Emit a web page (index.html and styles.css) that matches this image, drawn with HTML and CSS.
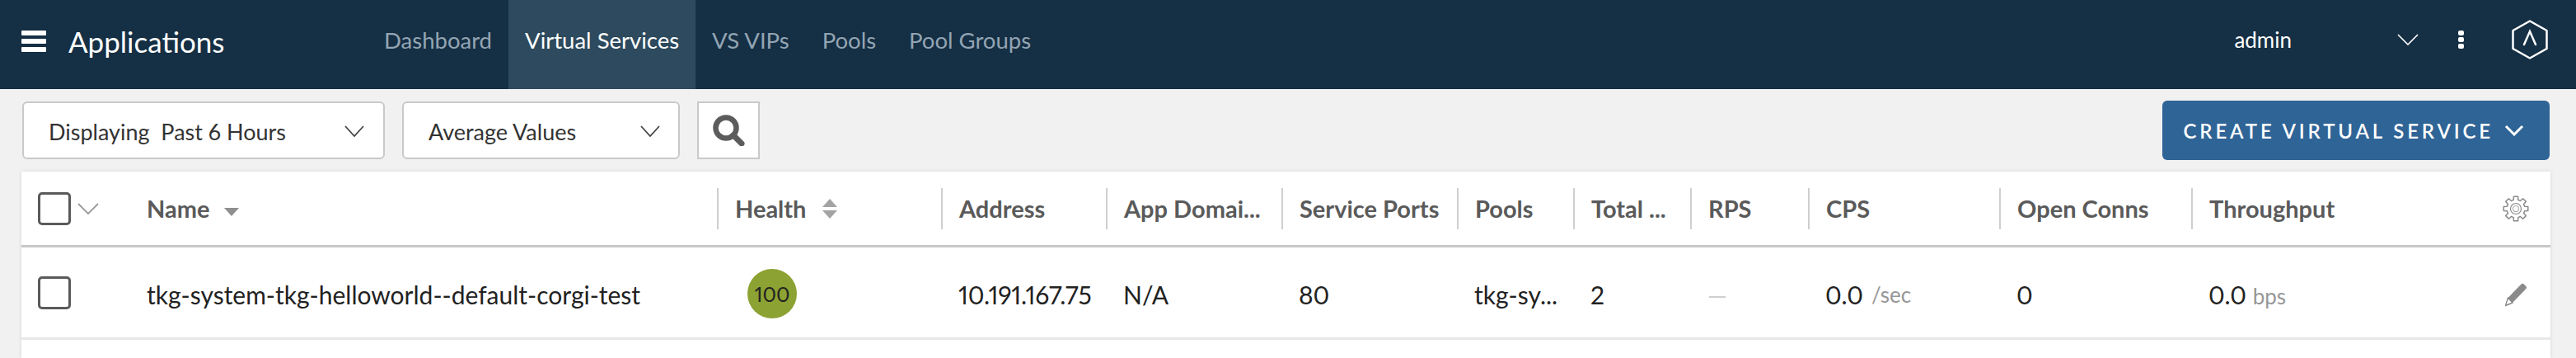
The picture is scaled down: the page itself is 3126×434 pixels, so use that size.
FILE: index.html
```html
<!DOCTYPE html>
<html lang="en">
<head>
    <meta charset="UTF-8">
    <title>Applications</title>
    <link rel="stylesheet" href="styles.css">
</head>
<body>
    <header class="topbar">
        <div class="brand">
            <div class="burger"><span></span><span></span><span></span></div>
            <div class="brand-title">Applications</div>
        </div>
        <nav class="tabs">
            <a class="tab">Dashboard</a>
            <a class="tab active">Virtual Services</a>
            <a class="tab">VS VIPs</a>
            <a class="tab">Pools</a>
            <a class="tab">Pool Groups</a>
        </nav>
        <div class="user">
            <span class="user-name">admin</span>
            <svg class="user-caret" width="26" height="14" viewBox="0 0 26 14"><path d="M1 1l12 12L25 1" fill="none" stroke="#fff" stroke-width="1.6"/></svg>
            <div class="dots"><span></span><span></span><span></span></div>
            <svg class="logo" width="44" height="48" viewBox="0 0 44 48"><path d="M22 1.5L42.5 13v22L22 46.5 1.500 35V13z" fill="none" stroke="#fff" stroke-width="2.500" stroke-linejoin="round"/><path d="M15 30l7-16 7 16" fill="none" stroke="#fff" stroke-width="2.500" stroke-linecap="round"/></svg>
        </div>
    </header>

    <div class="toolbar">
        <div class="select select-time">
            <span>Displaying&nbsp; Past 6 Hours</span>
            <svg width="24" height="14" viewBox="0 0 24 14"><path d="M1 1l11 12L23 1" fill="none" stroke="#444" stroke-width="1.8"/></svg>
        </div>
        <div class="select select-values">
            <span>Average Values</span>
            <svg width="24" height="14" viewBox="0 0 24 14"><path d="M1 1l11 12L23 1" fill="none" stroke="#444" stroke-width="1.8"/></svg>
        </div>
        <div class="search-btn">
            <svg width="40" height="38" viewBox="0 0 40 38"><circle cx="17" cy="16" r="12.500" fill="none" stroke="#5c5c5c" stroke-width="6.500"/><path d="M26 25l10 10" stroke="#5c5c5c" stroke-width="7" stroke-linecap="round"/></svg>
        </div>
        <button class="create-btn">
            CREATE VIRTUAL SERVICE
            <svg width="24" height="14" viewBox="0 0 24 14"><path d="M2 2l10 10L22 2" fill="none" stroke="#fff" stroke-width="3"/></svg>
        </button>
    </div>

    <main class="grid">
        <div class="row row-head">
            <div class="cell cell-check">
                <span class="checkbox"></span>
                <svg class="check-caret" width="26" height="14" viewBox="0 0 26 14"><path d="M1 1l12 12L25 1" fill="none" stroke="#999" stroke-width="1.800"/></svg>
            </div>
            <div class="cell">Name <span class="sort-down"></span></div>
            <div class="cell divided">Health <span class="sort-both"><i class="up"></i><i class="down"></i></span></div>
            <div class="cell divided">Address</div>
            <div class="cell divided">App Domai...</div>
            <div class="cell divided">Service Ports</div>
            <div class="cell divided">Pools</div>
            <div class="cell divided">Total ...</div>
            <div class="cell divided">RPS</div>
            <div class="cell divided">CPS</div>
            <div class="cell divided">Open Conns</div>
            <div class="cell divided cell-last">
                Throughput
                <svg class="gear" width="32" height="32" viewBox="0 0 32 32" fill="none" stroke="#8a8a8a">
                    <path stroke-width="1.500" stroke-linejoin="round" d="M13.15 5.37L13.4 1.23H18.6L18.85 5.37L21.5 6.47L24.6 3.71L28.29 7.4L25.53 10.5L26.63 13.15L30.77 13.4V18.6L26.63 18.85L25.53 21.5L28.29 24.6L24.6 28.29L21.5 25.53L18.85 26.63L18.6 30.77H13.4L13.15 26.63L10.5 25.53L7.4 28.29L3.71 24.6L6.47 21.5L5.37 18.85L1.23 18.6V13.4L5.37 13.15L6.47 10.5L3.71 7.4L7.4 3.71L10.5 6.47z"/>
                    <circle cx="16" cy="16" r="6.500" stroke-width="1.200"/>
                    <circle cx="16" cy="16" r="3.500" stroke="#b0b0b0" stroke-width="1.200"/>
                </svg>
            </div>
        </div>
        <div class="row row-data">
            <div class="cell cell-check"><span class="checkbox"></span></div>
            <div class="cell">tkg-system-tkg-helloworld--default-corgi-test</div>
            <div class="cell"><span class="health">100</span></div>
            <div class="cell address">10.191.167.75</div>
            <div class="cell">N/A</div>
            <div class="cell">80</div>
            <div class="cell">tkg-sy...</div>
            <div class="cell">2</div>
            <div class="cell empty">—</div>
            <div class="cell">0.0 <span class="unit">/sec</span></div>
            <div class="cell">0</div>
            <div class="cell cell-last">
                <span>0.0 <span class="unit">bps</span></span>
                <svg class="pencil" width="28" height="30" viewBox="0 0 28 30">
                    <path d="M20.500 2.500q1.500-1.500 3-.3l3 3q1.200 1.500-.3 3L10 25 4.500 19z" fill="#8a8a8a"/>
                    <path d="M4.500 19L1.500 28.500 10 25z" fill="#fff" stroke="#8a8a8a" stroke-width="1.400" stroke-linejoin="round"/>
                </svg>
            </div>
        </div>
        <div class="row-rest"></div>
    </main>
</body>
</html>
```
FILE: styles.css
```css
html, body {
    height: 100%;
}

body {
    margin: 0;
    display: flex;
    flex-direction: column;
    background-color: #f1f1f1;
    font-family: "Lato", "Open Sans", sans-serif;
    font-variant-numeric: proportional-nums;
    overflow: hidden;
}

/* top bar */
.topbar {
    display: flex;
    height: 108px;
    background-color: #152f44;
    color: #fff;
}

.brand {
    display: flex;
    align-items: center;
    width: 446px;
    box-sizing: border-box;
    padding: 0 0 8px 26px;
}

.burger {
    display: flex;
    flex-direction: column;
    gap: 4px;
    width: 30px;
    margin-right: 27px;
}

.burger span {
    height: 6px;
    border-radius: 1px;
    background-color: #fff;
}

.brand-title {
    font-size: 35px;
}

.tabs {
    display: flex;
}

.tab {
    display: flex;
    align-items: center;
    padding: 0 20px 12px;
    font-size: 27.500px;
    color: #93a5b3;
}

.tab.active {
    background-color: #2d4a5e;
    color: #fff;
}

.user {
    display: flex;
    align-items: center;
    margin-left: auto;
    padding: 0 34px 12px 0;
}

.user-name {
    font-size: 26px;
    margin-right: 128px;
}

.dots {
    display: flex;
    flex-direction: column;
    gap: 2px;
    margin: 0 58px 0 48px;
}

.dots span {
    width: 7px;
    height: 6px;
    border-radius: 2px;
    background-color: #fff;
}

/* toolbar */
.toolbar {
    display: flex;
    align-items: center;
    height: 100px;
    padding: 0 32px 0 27px;
    box-sizing: border-box;
}

.select {
    display: flex;
    align-items: center;
    justify-content: space-between;
    box-sizing: border-box;
    height: 70px;
    margin-right: 21px;
    padding-top: 2px;
    background-color: #fff;
    border: 2px solid #c9c9c9;
    border-radius: 6px;
    font-size: 27px;
    color: #333;
}

.select-time {
    width: 440px;
    padding-left: 30px;
    padding-right: 23px;
}

.select-values {
    width: 337px;
    padding-left: 30px;
    padding-right: 22px;
}

.search-btn {
    display: flex;
    align-items: center;
    justify-content: center;
    box-sizing: border-box;
    width: 76px;
    height: 70px;
    background-color: #fff;
    border: 2px solid #c9c9c9;
}

.create-btn {
    display: flex;
    align-items: center;
    gap: 13px;
    margin-left: auto;
    height: 72px;
    padding: 0 31px 0 26px;
    background-color: #2f6496;
    color: #fff;
    border: none;
    border-radius: 6px;
    font-family: inherit;
    font-size: 24px;
    font-weight: 600;
    letter-spacing: 3.850px;
}

/* table */
.grid {
    flex: 1;
    display: flex;
    flex-direction: column;
    margin: 0 31px 0 26px;
    background-color: #fff;
    box-shadow: 0 0 4px #0000001f;
}

.row {
    display: grid;
    grid-template-columns: 131px 713px 272px 200px 213px 213px 141px 142px 143px 232px 233px 436px;
    align-items: center;
}

.row-head {
    height: 92px;
    box-sizing: border-box;
    border-bottom: 3px solid #c8c8c8;
    font-size: 29px;
    font-weight: 700;
    color: #5a5a5a;
}

.row-data {
    height: 112px;
    box-sizing: border-box;
    padding-top: 4px;
    border-bottom: 3px solid #e8e8e8;
    font-size: 30px;
    color: #222;
}

.cell {
    display: flex;
    align-items: center;
    gap: 10px;
    padding-left: 21px;
    white-space: nowrap;
}

.row-head .cell {
    height: 50px;
}

.divided {
    border-left: 2px solid #cfcfcf;
    padding-left: 20px;
}

.cell-check {
    gap: 8px;
    padding-left: 20px;
}

.row-data .cell-check {
    margin-top: -4px;
}

.address {
    letter-spacing: -0.200px;
}

.cell-last {
    justify-content: space-between;
    padding-right: 28px;
}

.checkbox {
    display: block;
    box-sizing: border-box;
    width: 40px;
    height: 40px;
    border: 3px solid #5a5a5a;
    border-radius: 5px;
}

.sort-down {
    width: 0;
    height: 0;
    margin: 8px 0 0 8px;
    border-left: 9px solid transparent;
    border-right: 9px solid transparent;
    border-top: 10px solid #8f8f8f;
}

.sort-both {
    display: flex;
    flex-direction: column;
    gap: 4px;
    margin-left: 10px;
}

.sort-both i {
    display: block;
    width: 0;
    height: 0;
    border-left: 9px solid transparent;
    border-right: 9px solid transparent;
}

.sort-both .up {
    border-bottom: 10px solid #a3a3a3;
}

.sort-both .down {
    border-top: 10px solid #a3a3a3;
}

.health {
    display: flex;
    align-items: center;
    justify-content: center;
    width: 60px;
    height: 60px;
    margin: -2px 0 0 16px;
    border-radius: 50%;
    background-color: #8ca232;
    font-size: 25px;
}

.empty {
    color: #cfcfcf;
}

.unit {
    font-size: 26px;
    color: #979797;
}

.gear {
    flex: none;
    margin-right: -2px;
}

.row-rest {
    flex: 1;
}
```
